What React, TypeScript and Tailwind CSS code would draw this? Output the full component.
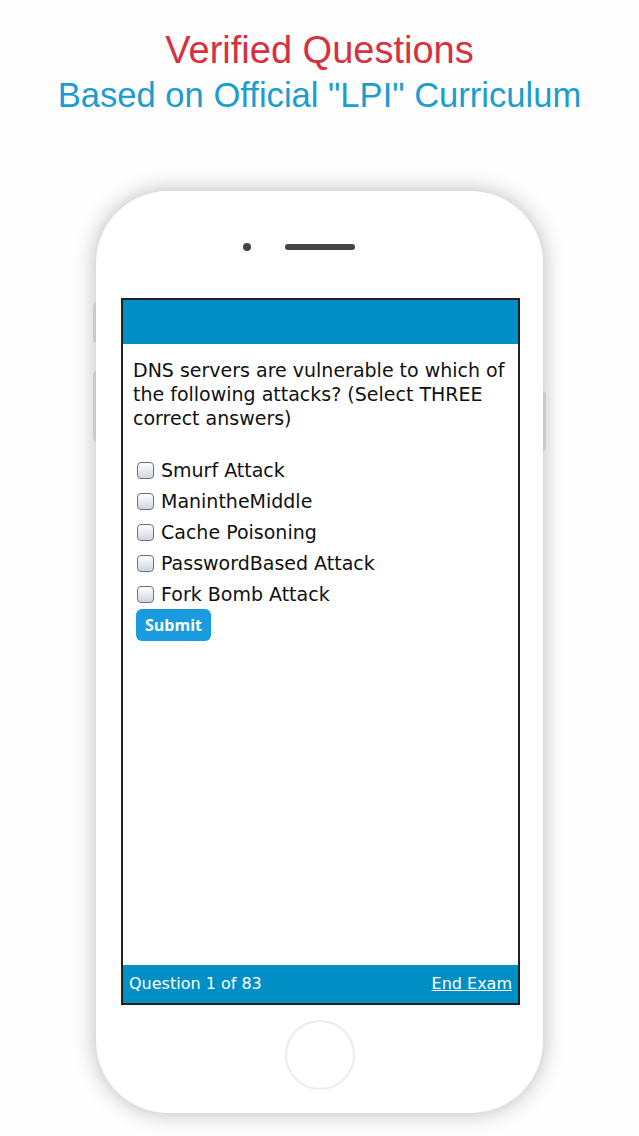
import React from "react";

const options = [
  "Smurf Attack",
  "ManintheMiddle",
  "Cache Poisoning",
  "PasswordBased Attack",
  "Fork Bomb Attack",
];

const Checkbox = () => (
  <span className="inline-block w-[17px] h-[17px] rounded-[4px] border border-gray-500 bg-gradient-to-b from-white to-gray-300 shrink-0" />
);

const App = () => {
  return (
    <div className="w-[639px] h-[1136px] bg-[#fefefe] overflow-hidden flex flex-col items-center">
      {/* Heading */}
      <div className="pt-[31px] text-center font-['Liberation_Sans',Arial,sans-serif] leading-none">
        <h1 className="text-[38px] text-[#d7303f]">Verified Questions</h1>
        <h2 className="mt-[9px] text-[34.6px] text-[#1b9dcf]">
          Based on Official "LPI" Curriculum
        </h2>
      </div>

      {/* Phone */}
      <div className="relative mt-[78px] w-[447px]">
        {/* side buttons */}
        <span className="absolute left-[-3px] top-[112px] w-[4px] h-[40px] rounded-l bg-gray-200" />
        <span className="absolute left-[-3px] top-[180px] w-[4px] h-[70px] rounded-l bg-gray-200" />
        <span className="absolute right-[-3px] top-[200px] w-[4px] h-[60px] rounded-r bg-gray-200" />

        <div className="relative h-[922px] rounded-[72px] bg-white shadow-[0_0_22px_rgba(0,0,0,0.28)] flex flex-col">
          {/* earpiece */}
          <div className="h-[107px] flex items-center justify-center gap-[34px] pt-[6px]">
            <span className="w-[8px] h-[8px] rounded-full bg-[#444]" />
            <span className="w-[70px] h-[6px] rounded-full bg-[#444]" />
            <span className="w-[8px] h-[8px]" />
          </div>

          {/* screen */}
          <div className="ml-[25px] w-[399px] h-[707px] border-2 border-[#222] flex flex-col font-['DejaVu_Sans',Verdana,sans-serif]">
            <div className="h-[44px] bg-[#008fc4]" />
            <div className="flex-1 px-[10px] pt-[14px] text-[#111]">
              <p className="text-[19px] leading-[24px]">
                DNS servers are vulnerable to which of the following attacks?
                (Select THREE correct answers)
              </p>
              <div className="mt-[29px] flex flex-col gap-[8px]">
                {options.map((o) => (
                  <label key={o} className="flex items-center gap-[7px] pl-[4px] h-[23px] text-[19px]">
                    <Checkbox />
                    <span>{o}</span>
                  </label>
                ))}
              </div>
              <button className="mt-[3px] ml-[3px] h-[32px] px-[9px] rounded-[6px] bg-[#1a9be0] text-white text-[16px] font-bold font-['Open_Sans',sans-serif]">
                Submit
              </button>
            </div>
            <div className="h-[38px] bg-[#008fc4] flex items-center justify-between px-[6px] text-white text-[16px]">
              <span>Question 1 of 83</span>
              <span className="underline">End Exam</span>
            </div>
          </div>

          {/* home button */}
          <div className="flex-1 flex items-center justify-center pb-[8px]">
            <span className="w-[70px] h-[70px] rounded-full border-2 border-[#ececec]" />
          </div>
        </div>
      </div>
    </div>
  );
};

export default App;
